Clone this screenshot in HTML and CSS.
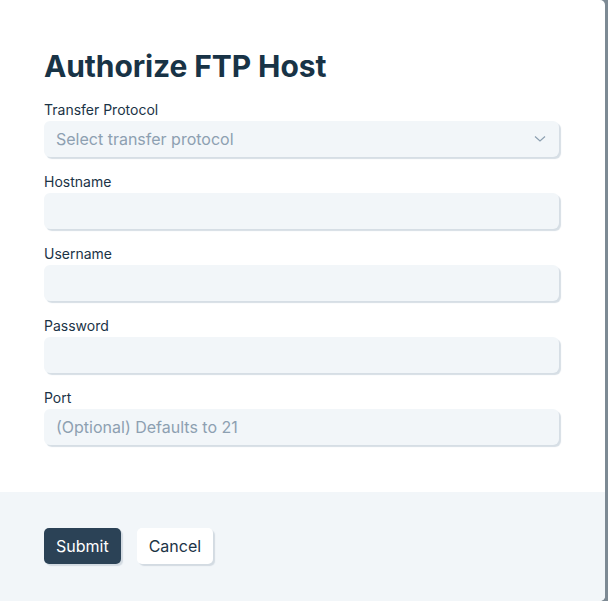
FILE: index.html
```html
<!DOCTYPE html>
<html>
<head>
<meta charset="utf-8">
<title>Authorize FTP Host</title>
<link rel="stylesheet" href="styles.css">
</head>
<body>
<div class="modal">
  <div class="modal-body">
    <h1 class="title">Authorize FTP Host</h1>
    <form class="form">
      <div class="field">
        <label class="label">Transfer Protocol</label>
        <div class="select">
          <span class="placeholder">Select transfer protocol</span>
          <svg class="chevron" width="12" height="8" viewBox="0 0 12 8"><path d="M1 1.5 L6 6 L11 1.5" fill="none" stroke="#8da0b1" stroke-width="1.2"/></svg>
        </div>
      </div>
      <div class="field">
        <label class="label">Hostname</label>
        <input class="input" type="text">
      </div>
      <div class="field">
        <label class="label">Username</label>
        <input class="input" type="text">
      </div>
      <div class="field">
        <label class="label">Password</label>
        <input class="input" type="password">
      </div>
      <div class="field">
        <label class="label">Port</label>
        <input class="input" type="text" placeholder="(Optional) Defaults to 21">
      </div>
    </form>
  </div>
  <div class="modal-footer">
    <button class="btn btn-primary" type="button">Submit</button>
    <button class="btn btn-default" type="button">Cancel</button>
  </div>
</div>
</body>
</html>
```

FILE: styles.css
```css
body {
  margin: 0;
  padding: 0;
  background: #7d8a94;
  font-family: Inter, "Noto Sans", sans-serif;
  color: #1b3346;
}
.modal {
  width: 605px;
  height: 601px;
  background: #fff;
  border-radius: 0 5px 5px 0;
  overflow: hidden;
  display: flex;
  flex-direction: column;
}
.modal-body {
  padding: 48px 44px 0 44px;
  height: 444px;
}
.title {
  margin: 0 0 17px 0;
  font-size: 30px;
  line-height: 36px;
  font-weight: 700;
  color: #183346;
  letter-spacing: -0.1px;
}
.form {
  display: flex;
  flex-direction: column;
  gap: 16px;
  width: 515px;
}
.field {
  display: flex;
  flex-direction: column;
}
.label {
  font-size: 14px;
  line-height: 18px;
  font-weight: 400;
  color: #1b3346;
  margin-bottom: 2px;
}
.input, .select {
  box-sizing: border-box;
  height: 36px;
  border: none;
  border-radius: 6px;
  background: #f2f6f9;
  box-shadow: 2px 2px 1px #d6dee5;
  padding: 0 12px;
  font-family: Inter, "Noto Sans", sans-serif;
  font-size: 16px;
  color: #1b3346;
  outline: none;
}
.input::placeholder, .placeholder {
  color: #8da0b1;
}
.select {
  display: flex;
  align-items: center;
  justify-content: space-between;
}
.chevron {
  margin-right: 1px;
}
.modal-footer {
  flex: 1;
  background: #f2f6f9;
  padding: 36px 44px 0 44px;
  display: flex;
  gap: 16px;
  align-items: flex-start;
}
.btn {
  height: 36px;
  padding: 0 12px;
  border: none;
  border-radius: 5px;
  font-family: Inter, "Noto Sans", sans-serif;
  font-size: 16px;
  box-shadow: 2px 2px 1px #d3dbe2;
}
.btn-primary {
  background: #2b4256;
  color: #fff;
}
.btn-default {
  background: #fff;
  color: #1b3346;
}
```
